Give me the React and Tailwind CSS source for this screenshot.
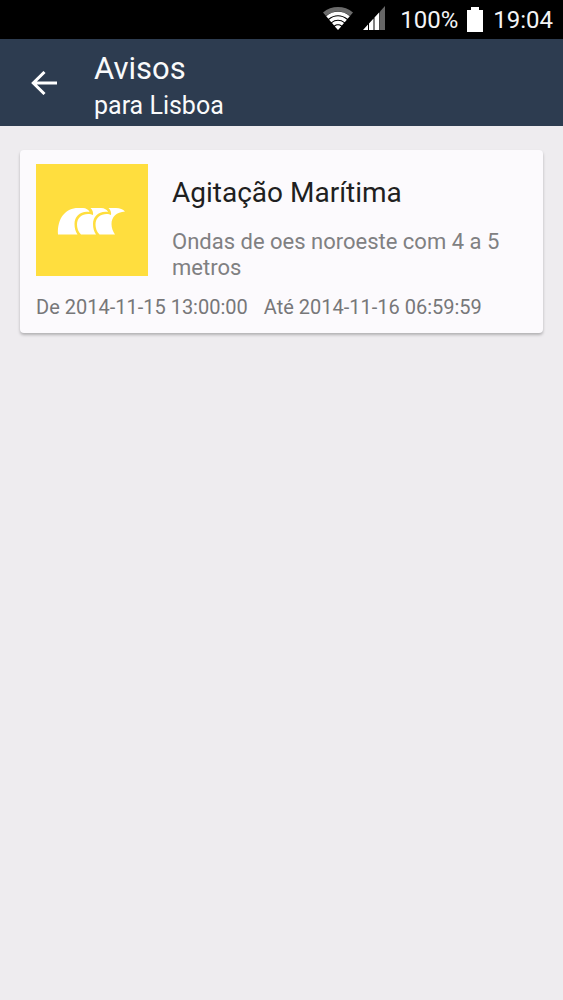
const warnings = [
  {
    id: 1,
    title: "Agitação Marítima",
    description: "Ondas de oes noroeste com 4 a 5 metros",
    from: "2014-11-15 13:00:00",
    to: "2014-11-16 06:59:59",
  },
];

function StatusBar() {
  return (
    <div className="flex h-[39px] items-center justify-end bg-black pr-[10px] text-[24px] text-gray-100">
      <div className="mr-[15px] mb-[9px] flex items-end gap-[10px] self-end">
        <svg className="h-[23px] w-[30px]" viewBox="0 0 30 23" aria-hidden="true">
          <path d="M0 5.5C8.5 -1.8 21.5 -1.8 30 5.5L27 9C20 3 10 3 3 9Z" fill="#6b6b6b" />
          <path d="M3.2 9.2C10 3.4 20 3.4 26.8 9.2L24.6 11.8C19 7 11 7 5.4 11.8Z" fill="#fff" />
          <path d="M6.1 12.7C11.3 8.2 18.7 8.2 23.9 12.7L21.7 15.3C17.8 12 12.2 12 8.3 15.3Z" fill="#fff" />
          <path d="M9 16.1C12.5 13.1 17.5 13.1 21 16.1L18.9 18.6C16.6 16.7 13.4 16.7 11.1 18.6Z" fill="#fff" />
          <path d="M11.8 19.4C13.7 17.9 16.3 17.9 18.2 19.4L15 23Z" fill="#fff" />
        </svg>
        <svg className="h-6 w-[22px]" viewBox="0 0 22 24" aria-hidden="true">
          <path d="M17 5.5L22 0V24H17Z" fill="#666" />
          <path d="M0 24L5 18.5V24ZM6 17.5L10.5 12.5V24H6ZM11.5 11.5L16.3 6.2V24H11.5Z" fill="#fff" />
        </svg>
      </div>
      <span className="pt-px">100%</span>
      <svg className="mr-[10px] ml-[9px] h-[25px] w-4" viewBox="0 0 16 25" aria-hidden="true">
        <path d="M4 0H12V3H16V25H0V3H4Z" fill="#fff" />
      </svg>
      <span className="pt-px">19:04</span>
    </div>
  );
}

function Header() {
  return (
    <header className="flex h-[87px] items-center bg-[#2d3c50] text-gray-50">
      <button type="button" aria-label="Voltar" className="ml-[31px] h-6 w-[26px]">
        <svg className="h-6 w-[26px]" viewBox="0 0 26 24" fill="none" stroke="#fff" strokeWidth="3">
          <path d="M26 12H2.5M13.5 1L2.3 12L13.5 23" />
        </svg>
      </button>
      <div className="ml-[37px] pt-[6px]">
        <h1 className="text-[31px] leading-10">Avisos</h1>
        <p className="text-[25px] leading-[34px]">para Lisboa</p>
      </div>
    </header>
  );
}

function WaveIcon() {
  return (
    <svg className="size-28 shrink-0 bg-[#ffde3e]" viewBox="0 0 112 112" fill="#fff" aria-hidden="true">
      <path d="M22 70.5C21 54 30 44 42 44H47C50 44.2 52.5 45.5 53.5 48C45 46.5 38.5 52 38.5 60C38.5 64 39.5 67.5 41.5 70.5Z" />
      <path d="M45 70.5C42 67.5 41 64 41 60.5C41 54 46 50 52 50C54 50 56 50.5 57 51C57.5 48.5 56.5 46 54.5 44H65C68.5 44.2 71 45.5 72 48C63.5 46.5 57 52 57 60C57 64 58 67.5 60 70.5Z" />
      <path d="M63.5 70.5C60.5 67.5 59.5 64 59.5 60.5C59.5 54 64.5 50 70.5 50C72.5 50 74 50.5 75 51C75.5 48.5 74.5 46 72.5 44H80C84 44 87 45.5 89 47.5C80.5 48 75.5 53 75.5 60C75.5 64 77 67.5 79 70.5Z" />
    </svg>
  );
}

function WarningCard({ warning }) {
  return (
    <article className="rounded-sm bg-[#fcfafd] px-4 pt-[14px] pb-3 shadow-[0_2px_3px_rgba(0,0,0,0.25)]">
      <div className="flex gap-6">
        <WaveIcon />
        <div className="pt-[9px]">
          <h2 className="text-[28px] leading-10 text-[#1f1f21]">{warning.title}</h2>
          <p className="mt-4 text-[22px] leading-[26px] text-[#808082]">{warning.description}</p>
        </div>
      </div>
      <div className="mt-3 flex gap-4 text-[20px] leading-7 text-[#777779]">
        <span>De {warning.from}</span>
        <span>Até {warning.to}</span>
      </div>
    </article>
  );
}

function App() {
  return (
    <div className="min-h-screen bg-[#eeecef] font-[Roboto,sans-serif]">
      <StatusBar />
      <Header />
      <main className="space-y-4 px-5 pt-6">
        {warnings.map((warning) => (
          <WarningCard key={warning.id} warning={warning} />
        ))}
      </main>
    </div>
  );
}

export default App;
